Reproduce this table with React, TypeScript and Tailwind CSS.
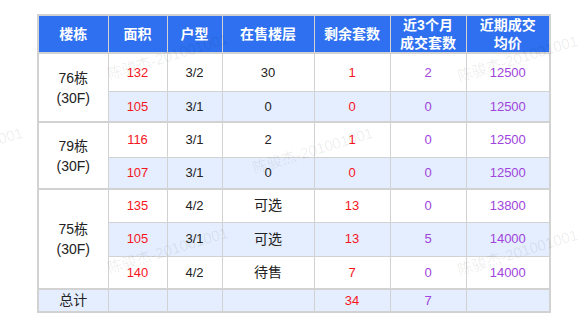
type Row = {
  area: string
  layout: string
  floor: string
  left: string
  sold: string
  price: string
}

type Group = {
  name: string
  heights: number[]
  rows: Row[]
}

const groups: Group[] = [
  {
    name: '76栋',
    heights: [38, 31],
    rows: [
      { area: '132', layout: '3/2', floor: '30', left: '1', sold: '2', price: '12500' },
      { area: '105', layout: '3/1', floor: '0', left: '0', sold: '0', price: '12500' },
    ],
  },
  {
    name: '79栋',
    heights: [35, 32],
    rows: [
      { area: '116', layout: '3/1', floor: '2', left: '1', sold: '0', price: '12500' },
      { area: '107', layout: '3/1', floor: '0', left: '0', sold: '0', price: '12500' },
    ],
  },
  {
    name: '75栋',
    heights: [33, 34, 33],
    rows: [
      { area: '135', layout: '4/2', floor: '可选', left: '13', sold: '0', price: '13800' },
      { area: '105', layout: '3/1', floor: '可选', left: '13', sold: '5', price: '14000' },
      { area: '140', layout: '4/2', floor: '待售', left: '7', sold: '0', price: '14000' },
    ],
  },
]

const marks = [
  { x: 108, y: 64 },
  { x: 458, y: 66 },
  { x: 253, y: 158 },
  { x: -97, y: 158 },
  { x: 108, y: 258 },
  { x: 458, y: 260 },
]

const cell = 'border border-[#d2d2d2] text-center align-middle p-0'

export default function App() {
  return (
    <div
      className="relative h-[334px] w-[588px] overflow-hidden bg-white text-[13px] text-[#222]"
      style={{ fontFamily: '"Liberation Sans", "Noto Sans CJK SC", sans-serif' }}
    >
      <div className="pl-[37px] pt-[14px]">
        <table className="w-[512px] table-fixed border-collapse border-2 border-[#d2d2d2]">
          <colgroup>
            <col className="w-[70px]" />
            <col className="w-[59px]" />
            <col className="w-[55px]" />
            <col className="w-[92px]" />
            <col className="w-[76px]" />
            <col className="w-[76px]" />
            <col className="w-[84px]" />
          </colgroup>
          <thead>
            <tr className="h-[38px] bg-[#2e70f0] text-[14px] font-bold leading-[18px] text-white">
              <th className={cell}>楼栋</th>
              <th className={cell}>面积</th>
              <th className={cell}>户型</th>
              <th className={cell}>在售楼层</th>
              <th className={cell}>剩余套数</th>
              <th className={cell}>
                近3个月
                <br />
                成交套数
              </th>
              <th className={cell}>
                近期成交
                <br />
                均价
              </th>
            </tr>
          </thead>
          <tbody>
            {groups.map((g) =>
              g.rows.map((r, i) => (
                <tr
                  key={g.name + i}
                  className={`${i % 2 === 1 ? 'bg-[#e5eefe]' : 'bg-white'} ${i === 0 ? 'border-t-2 border-[#d2d2d2]' : ''}`}
                  style={{ height: g.heights[i] }}
                >
                  {i === 0 && (
                    <td rowSpan={g.rows.length} className={`${cell} bg-white text-[14px] leading-[20px]`}>
                      {g.name}
                      <br />
                      (30F)
                    </td>
                  )}
                  <td className={`${cell} text-[#f5161e]`}>{r.area}</td>
                  <td className={cell}>{r.layout}</td>
                  <td className={`${cell} ${/\d/.test(r.floor) ? '' : 'text-[14px]'}`}>{r.floor}</td>
                  <td className={`${cell} text-[#f5161e]`}>{r.left}</td>
                  <td className={`${cell} text-[#a044dc]`}>{r.sold}</td>
                  <td className={`${cell} text-[#a044dc]`}>{r.price}</td>
                </tr>
              )),
            )}
            <tr className="h-[22px] border-t-2 border-[#d2d2d2] bg-[#e5eefe]">
              <td className={`${cell} text-[14px]`}>总计</td>
              <td className={cell}></td>
              <td className={cell}></td>
              <td className={cell}></td>
              <td className={`${cell} text-[#f5161e]`}>34</td>
              <td className={`${cell} text-[#a044dc]`}>7</td>
              <td className={cell}></td>
            </tr>
          </tbody>
        </table>
      </div>

      {/* watermark overlay */}
      <div className="pointer-events-none absolute inset-0">
        {marks.map((m, i) => (
          <span
            key={i}
            className="absolute origin-left whitespace-nowrap text-[15px] text-black/[0.08]"
            style={{ left: m.x, top: m.y, transform: 'rotate(-17deg)' }}
          >
            陈骏杰-201001001
          </span>
        ))}
      </div>
    </div>
  )
}
